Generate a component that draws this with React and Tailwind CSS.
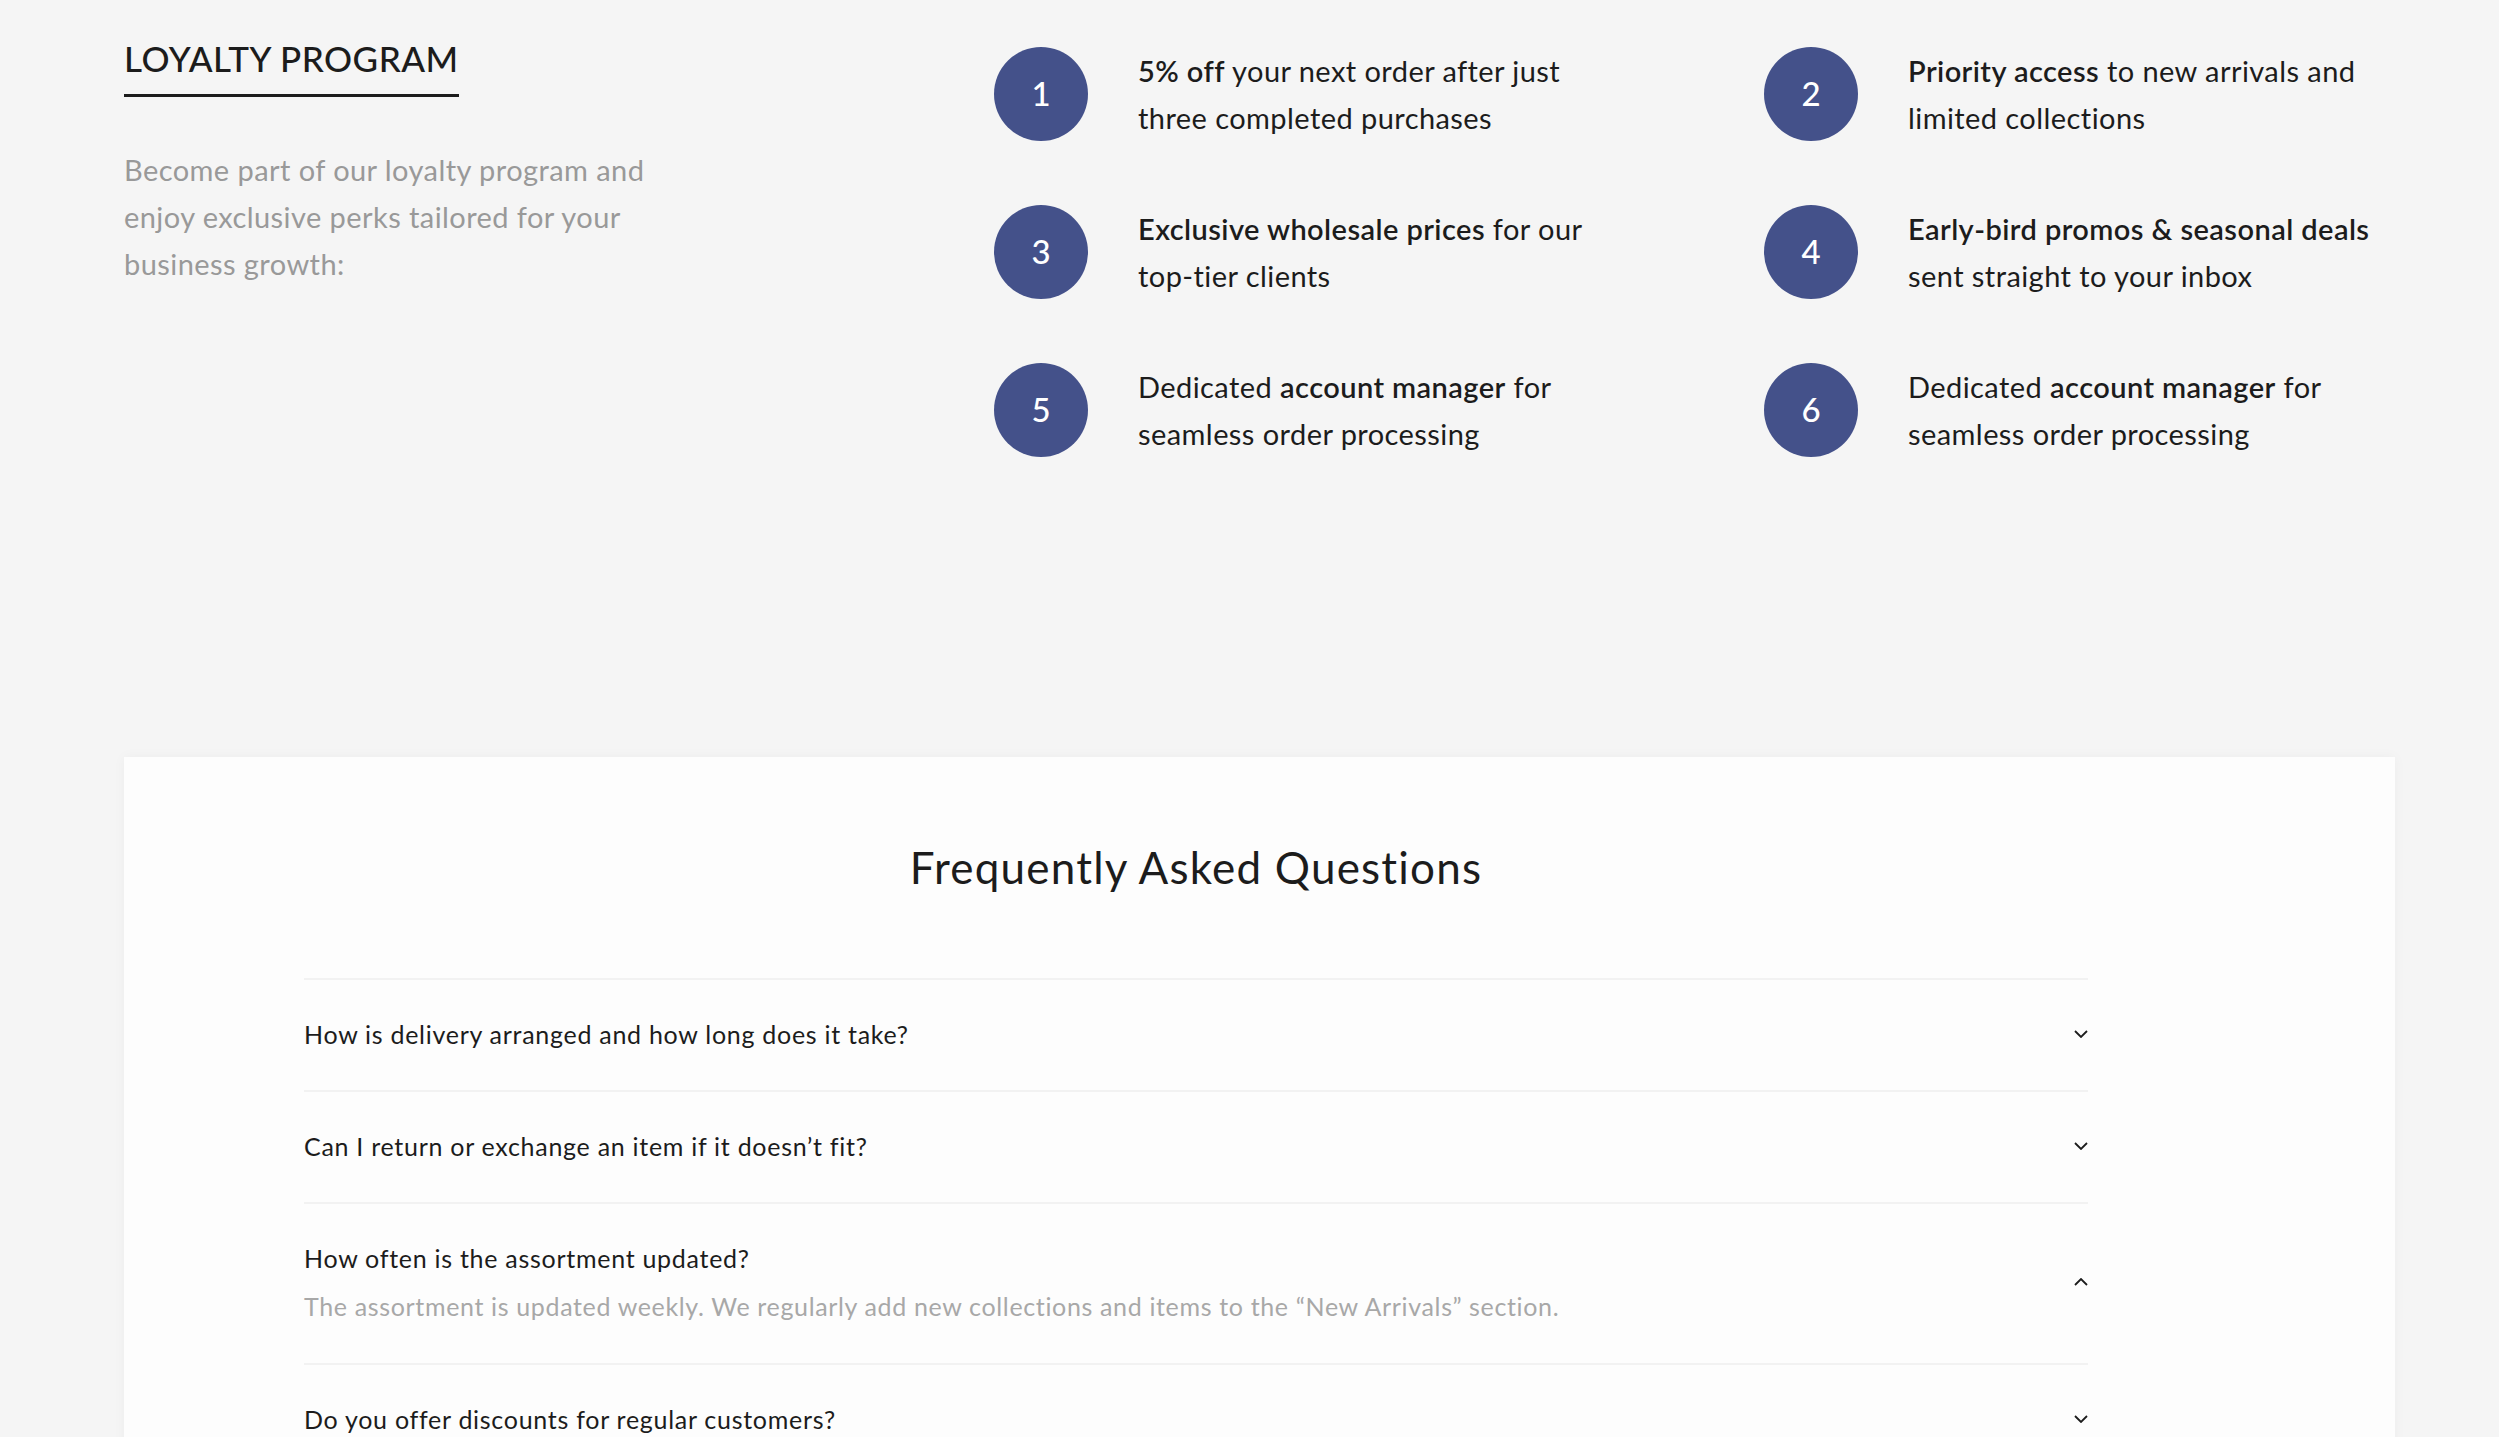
import React, { useState } from "react";

const perks = [
  { n: 1, bold: "5% off", rest: " your next order after just three completed purchases", lead: "" },
  { n: 2, bold: "Priority access", rest: " to new arrivals and limited collections", lead: "" },
  { n: 3, bold: "Exclusive wholesale prices", rest: " for our top-tier clients", lead: "" },
  { n: 4, bold: "Early-bird promos & seasonal deals", rest: " sent straight to your inbox", lead: "" },
  { n: 5, lead: "Dedicated ", bold: "account manager", rest: " for seamless order processing" },
  { n: 6, lead: "Dedicated ", bold: "account manager", rest: " for seamless order processing" },
];

const faqs = [
  {
    q: "How is delivery arranged and how long does it take?",
    a: "Delivery is arranged by courier or transport company. Orders are usually shipped within 1–3 business days.",
  },
  {
    q: "Can I return or exchange an item if it doesn’t fit?",
    a: "Yes, items can be returned or exchanged within 14 days if they keep their original condition.",
  },
  {
    q: "How often is the assortment updated?",
    a: "The assortment is updated weekly. We regularly add new collections and items to the “New Arrivals” section.",
  },
  {
    q: "Do you offer discounts for regular customers?",
    a: "Yes, regular customers can join our loyalty program and get exclusive prices and promotions.",
  },
];

const Chevron = ({ up }) => (
  <svg width="14" height="8" viewBox="0 0 14 8" fill="none" className="shrink-0">
    {up ? (
      <polyline points="1,7 7,1 13,7" stroke="#1c1c1c" strokeWidth="1.8" />
    ) : (
      <polyline points="1,1 7,7 13,1" stroke="#1c1c1c" strokeWidth="1.8" />
    )}
  </svg>
);

const App = () => {
  const [open, setOpen] = useState(2); // третий вопрос раскрыт

  return (
    <div
      className="h-[1437px] overflow-hidden bg-[#f5f5f5] pl-[124px] pr-[104px]"
      style={{ fontFamily: "Lato, 'Noto Sans', sans-serif" }}
    >
      {/* Loyalty program */}
      <section className="flex pt-[41px]">
        <div className="w-[870px] shrink-0">
          <h2 className="inline-block text-[35px] leading-[35px] tracking-[0.5px] font-medium text-[#1c1c1c] pb-[18px] border-b-[3px] border-[#1c1c1c]">
            LOYALTY PROGRAM
          </h2>
          <p className="mt-[49px] w-[540px] text-[29px] leading-[47px] tracking-[0.43px] text-[#999999]">
            Become part of our loyalty program and enjoy exclusive perks tailored for your business growth:
          </p>
        </div>
        <div className="mt-[6px] grid grid-cols-[624px_624px] gap-x-[146px] gap-y-[64px]">
          {perks.map((p) => (
            <div key={p.n} className="flex items-center gap-[50px]">
              <div className="w-[94px] h-[94px] shrink-0 rounded-full bg-[#44518a] flex items-center justify-center text-white text-[33px] font-medium">
                {p.n}
              </div>
              <p className="w-[480px] text-[29px] leading-[47px] tracking-[0.43px] text-[#1c1c1c]">
                {p.lead}
                <span className="font-semibold">{p.bold}</span>
                {p.rest}
              </p>
            </div>
          ))}
        </div>
      </section>

      {/* FAQ */}
      <section className="mt-[300px] bg-[#fdfdfd] shadow-[0_0_12px_rgba(0,0,0,0.04)] pt-[84px] pl-[180px] pr-[307px] pb-[80px]">
        <h2 className="text-center text-[44px] leading-[52px] tracking-[1.2px] text-[#1c1c1c]">
          Frequently Asked Questions
        </h2>
        <div className="mt-[85px]">
          {faqs.map((f, i) => (
            <button
              key={f.q}
              onClick={() => setOpen(open === i ? -1 : i)}
              className="w-full flex items-center justify-between text-left border-t-2 border-[#f2f2f2] pt-[36px]"
              style={{ paddingBottom: open === i ? 39 : 38 }}
            >
              <div>
                <div className="text-[25px] leading-[36px] tracking-[0.72px] text-[#1c1c1c]">{f.q}</div>
                {open === i && (
                  <div className="mt-[12px] text-[25px] leading-[36px] tracking-[0.65px] text-[#a8a8a8]">{f.a}</div>
                )}
              </div>
              <Chevron up={open === i} />
            </button>
          ))}
        </div>
      </section>
    </div>
  );
};

export default App;
